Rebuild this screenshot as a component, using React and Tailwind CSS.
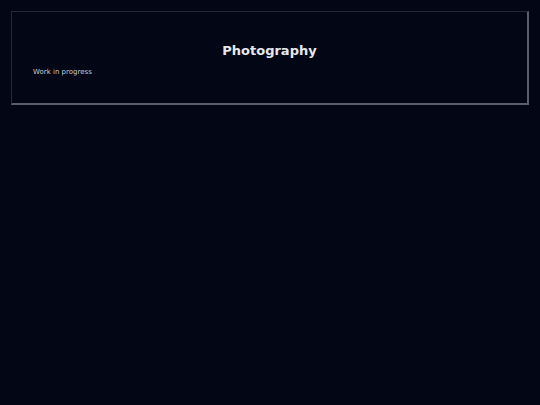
export default function App() {
  return (
    <div className="min-h-[405px] w-full bg-[#030614] p-[11px] font-['DejaVu_Sans',sans-serif]">
      <section className="border-t border-l border-[#262833] border-r-2 border-r-[#5b5d68] border-b-2 border-b-[#5b5d68] px-[21px] pt-[31px] pb-[26px]">
        <h1 className="text-center text-[13px] font-bold leading-[16px] text-[#e6e8ee]">Photography</h1>
        <p className="mt-[9px] text-[7px] leading-[9px] text-[#c9ccd4]">Work in progress</p>
      </section>
    </div>
  );
}
